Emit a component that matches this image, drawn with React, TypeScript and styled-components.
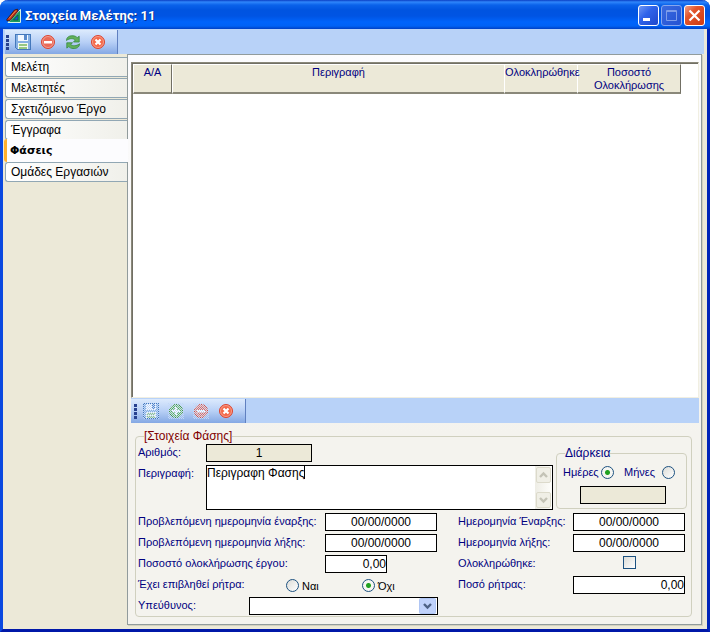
import React from "react";
import styled, { createGlobalStyle, css } from "styled-components";

const GlobalStyle = createGlobalStyle`
  * { box-sizing: border-box; }
  html, body { margin: 0; padding: 0; background: #ffffff; }
  body, input, textarea, select, button {
    font-family: "Liberation Sans", Arial, sans-serif;
    font-size: 12px;
    line-height: 14px;
    color: #000000;
  }
`;

const NAVY = "#000080";
const FACE = "#ece9d8";
const SHEET = "#f4f3ee";

const Window = styled.div`
  display: flex;
  flex-direction: column;
  min-height: 100vh;
  border: solid;
  border-width: 0 3px 3px;
  border-color: #0a48e0 #0024b8 #0018a8 #0a48e0;
  border-radius: 8px 8px 0 0;
  background: ${FACE};
`;

const TitleBar = styled.header`
  display: flex;
  align-items: center;
  height: 29px;
  margin: 0 -3px;
  padding: 2px 5px 0 6px;
  border-radius: 8px 8px 0 0;
  background: linear-gradient(#0a3fc4 0, #2f86fb 2px, #0a62ea 5px, #0054e0 10px, #0054e3 16px, #0064fb 22px, #0062f5 26px, #0040c4 29px);
`;

const Title = styled.h1`
  flex: 1;
  margin: 0 0 0 3px;
  padding-top: 1px;
  font: bold 13px/18px Roboto, "Open Sans", sans-serif;
  color: #ffffff;
  text-shadow: 1px 1px 0 #0a2f8a;
`;

const CaptionButtons = styled.div`
  display: flex;
  gap: 2px;
`;

const CaptionButton = styled.button<{ $kind: "min" | "max" | "close" }>`
  width: 21px;
  height: 21px;
  padding: 0;
  border: 1px solid ${(p) => (p.$kind === "max" ? "#86a6ee" : "#ffffff")};
  border-radius: 3px;
  background: ${(p) =>
    p.$kind === "close"
      ? "linear-gradient(135deg, #f0a088, #e2552c 35%, #cf3a10)"
      : p.$kind === "max"
      ? "linear-gradient(135deg, #3a6ae0, #2452d2)"
      : "linear-gradient(135deg, #6f97f4, #2f63ea 40%, #1f48cc)"};
  svg { display: block; }
`;

const ToolStrip = styled.div<{ $dock?: boolean }>`
  display: flex;
  height: 25px;
  flex: none;
  background: #b8d2f8;
  ${(p) => p.$dock && css`margin-right: 3px; padding-left: 2px;`}
`;

const Tools = styled.div<{ $inset?: boolean }>`
  display: flex;
  align-items: center;
  gap: 9px;
  height: 24px;
  margin-top: 1px;
  padding: 0 11px 0 ${(p) => (p.$inset ? 3 : 1)}px;
  border-right: 1px solid #6080c0;
  background: linear-gradient(#dceafd, #b8d0f6 50%, #84a8e4);
`;

const Grip = styled.span`
  width: 3px;
  height: 15px;
  margin-right: -3px;
  background: repeating-linear-gradient(#27418f 0 3px, transparent 3px 4px);
`;

const ToolButton = styled.button`
  width: 16px;
  height: 16px;
  padding: 0;
  border: 0;
  background: none;
  svg { display: block; }
`;

const Main = styled.div`
  display: flex;
  flex: 1;
  padding: 0 5px 4px 2px;
`;

const Tabs = styled.nav`
  display: flex;
  flex-direction: column;
  gap: 1px;
  width: 122px;
  padding-top: 3px;
`;

const Tab = styled.button<{ $active?: boolean }>`
  height: 20px;
  flex: none;
  padding: 0 0 0 5px;
  text-align: left;
  border: 1px solid #91a7b4;
  border-right: 0;
  border-radius: 3px 0 0 3px;
  background: linear-gradient(90deg, #ffffff, #f0f0ea);
  ${(p) =>
    p.$active &&
    css`
      z-index: 1;
      height: 23px;
      margin: -2px -1px -1px -1px;
      padding: 1px 0 0 3px;
      border: 0;
      border-left: 3px solid #ffb02e;
      background: #fcfcfe;
      font: bold 11px/14px "DejaVu Sans", sans-serif;
    `}
`;

const Sheet = styled.main`
  display: flex;
  flex: 1;
  min-width: 0;
  flex-direction: column;
  border: 1px solid #919b9c;
  box-shadow: 1px 1px 0 #d5d2bf;
  background: linear-gradient(#fcfcfe, ${SHEET} 380px);
  padding: 7px 2px 7px 3px;
`;

const GridView = styled.div`
  flex: 1;
  border: 1px solid;
  border-color: #8a887a #f1efe2 #f1efe2 #8a887a;
  box-shadow: inset 1px 1px 0 #716f64;
  background: #ffffff;
  padding: 1px 17px 0 1px;
`;

const Table = styled.table`
  width: 100%;
  table-layout: fixed;
  border-collapse: separate;
  border-spacing: 0;
`;

const HeadCell = styled.th<{ $width?: number; $strong?: boolean }>`
  width: ${(p) => (p.$width ? `${p.$width}px` : "auto")};
  height: 29px;
  padding: 1px 0 0;
  vertical-align: top;
  white-space: nowrap;
  font-weight: normal;
  font-size: 11px;
  line-height: 13px;
  color: ${NAVY};
  background: ${FACE};
  border-top: 1px solid #ffffff;
  border-left: 1px solid #ffffff;
  border-bottom: 2px solid #8a887a;
  border-right: ${(p) => (p.$strong ? "1px solid #716f64" : "0")};
`;

const Form = styled.form`
  padding: 6px 7px 0 4px;
`;

const Group = styled.fieldset`
  min-width: 0;
  margin: 0;
  padding: 0 0 1px;
  border: 1px solid #d0d0bf;
  border-radius: 4px;
`;

const Legend = styled.legend<{ $color: string }>`
  margin-left: 8px;
  padding: 0;
  height: 14px;
  color: ${(p) => p.$color};
`;

const TopArea = styled.div`
  display: flex;
  gap: 3px;
  padding: 1px 4px 3px 2px;
`;

const Identity = styled.div`
  display: grid;
  flex: 1;
  grid-template-columns: 68px 1fr;
  grid-template-rows: 18px 45px;
  row-gap: 3px;
`;

const Label = styled.label`
  color: ${NAVY};
  font-size: 11px;
  line-height: 16px;
  white-space: nowrap;
`;

const TextField = styled.input<{ $width?: number; $align?: string; $off?: boolean }>`
  width: ${(p) => p.$width ?? 112}px;
  height: 18px;
  padding: 0;
  border: 1px solid #000000;
  border-radius: 0;
  outline: 0;
  text-align: ${(p) => p.$align ?? "center"};
  background: ${(p) => (p.$off ? FACE : "#ffffff")};
`;

const MemoBox = styled.div`
  position: relative;
  display: flex;
  border: 1px solid #000000;
  background: #ffffff;
`;

const Memo = styled.textarea`
  flex: 1;
  min-width: 0;
  padding: 0;
  border: 0;
  outline: 0;
  resize: none;
  overflow: hidden;
  background: transparent;
`;

const Caret = styled.span`
  position: absolute;
  top: 0;
  left: 97px;
  width: 1px;
  height: 13px;
  background: #000000;
`;

const ScrollBar = styled.div`
  display: flex;
  flex-direction: column;
  justify-content: space-between;
  width: 17px;
  padding: 1px;
  background: linear-gradient(90deg, #eeede5, #fefefb);
`;

const ScrollButton = styled.button`
  width: 15px;
  height: 16px;
  padding: 0;
  border: 1px solid #dcdacb;
  border-radius: 2px;
  background: #f0efe6;
  svg { display: block; }
`;

const Duration = styled(Group)`
  width: 131px;
  margin-top: 2px;
  height: 63px;
`;

const DurationChoices = styled.div`
  display: grid;
  grid-template-columns: 38px 23px 38px 13px;
  align-items: center;
  padding: 4px 0 0 6px;
`;

const Radio = styled.input`
  appearance: none;
  flex: none;
  width: 13px;
  height: 13px;
  margin: 0;
  border: 1px solid #1c5180;
  border-radius: 50%;
  background: linear-gradient(135deg, #dcdcd7, #ffffff);
  &:checked {
    background: radial-gradient(circle, #21a121 0 2px, #f6f6f2 3px);
  }
`;

const DurationValue = styled.div`
  display: flex;
  justify-content: center;
  padding: 6px 0 0 2px;
`;

const Rows = styled.div`
  display: grid;
  grid-template-columns: 187px 1fr 115px 112px;
  grid-auto-rows: 18px;
  row-gap: 3px;
  padding: 0 6px 0 2px;
`;

const CheckBox = styled.input`
  appearance: none;
  width: 13px;
  height: 13px;
  margin: 1px 0 0 50px;
  border: 1px solid #1c5180;
  background: linear-gradient(135deg, #dcdcd7, #ffffff);
`;

const Split = styled.div`
  display: grid;
  grid-column: span 2;
  grid-template-columns: 148px 76px 1fr;
`;

const Choice = styled.label`
  display: flex;
  align-items: center;
  gap: 3px;
  padding-top: 1px;
  font-size: 11px;
`;

const Owner = styled.div`
  display: grid;
  grid-column: span 2;
  grid-template-columns: 111px 189px;
`;

const SelectBox = styled.div`
  position: relative;
  display: flex;
  svg {
    position: absolute;
    top: 1px;
    right: 1px;
    pointer-events: none;
  }
`;

const Select = styled.select`
  appearance: none;
  flex: 1;
  height: 18px;
  padding: 0 20px 0 2px;
  border: 1px solid #000000;
  border-radius: 0;
  background: #ffffff;
`;

const AppIcon = () => (
  <svg width="16" height="16" viewBox="0 0 16 16">
    <path d="M2 14.500h12.500V1.500z" fill="#1c9b62" stroke="#d8f4e4" />
    <path d="M7.500 12h4.500V7z" fill="#0b5bd8" stroke="#0d5e3a" strokeWidth=".8" />
    <path d="M.8 11.500 8.500 2l3-.8.5 2L4 12.500l-3 .3z" fill="#b8321c" stroke="#3c1408" strokeWidth=".8" />
    <path d="M3 10.500 10 2.500" stroke="#f08a50" />
  </svg>
);

const Veil = ({ id }: { id: string }) => (
  <>
    <defs>
      <pattern id={id} width="2" height="2" patternUnits="userSpaceOnUse">
        <path d="M0 0h1v1H0zM1 1h1v1H1z" fill="#c4d9f8" shapeRendering="crispEdges" />
      </pattern>
    </defs>
    <rect width="16" height="16" fill={`url(#${id})`} />
  </>
);

const SaveIcon = ({ off }: { off?: boolean }) => (
  <svg width="16" height="16" viewBox="0 0 16 16" shapeRendering="crispEdges">
    <path d="M.5.5h15v15h-13l-2-2z" fill="#86b0e4" stroke="#4478bc" />
    <path d="M3 1h10v6H3z" fill="#f4f8ff" />
    <path d="M9 1h3v5H9z" fill="#5a8acc" />
    <path d="M3 9h10v6H3z" fill="#f4faee" />
    <path d="M4 10h8v2H4zM4 13h8v2H4z" fill="#98c884" />
    {off && <Veil id="veil-save" />}
  </svg>
);

const RoundIcon = ({ kind, off }: { kind: "minus" | "plus" | "cross"; off?: boolean }) => {
  const green = kind === "plus";
  return (
    <svg width="16" height="16" viewBox="0 0 16 16">
      <circle cx="8" cy="8" r="6.500" fill={green ? "#55b04c" : kind === "cross" ? "#f4694a" : "#ea6a58"} stroke={green ? "#3c9038" : "#dc4430"} />
      <circle cx="8" cy="8" r="5.500" fill="none" stroke="#ffffff" strokeOpacity=".35" />
      {kind === "minus" && <path d="M4 7h8v2.500H4z" fill="#ffffff" />}
      {kind === "plus" && <path d="M4 8h8M8 4v8" stroke="#ffffff" strokeWidth="2.400" />}
      {kind === "cross" && <path d="m5.500 5.500 5 5m0-5-5 5" stroke="#ffffff" strokeWidth="2.200" />}
      {off && <Veil id={`veil-${kind}`} />}
    </svg>
  );
};

const RefreshIcon = () => (
  <svg width="16" height="16" viewBox="0 0 16 16" fill="#62b05a" stroke="#358a3c" strokeWidth=".8">
    <path d="M1.500 6.500C1.500 3 4.500 1.500 8 1.800c1.800 0 3.200.8 4.200 1.900l2-1.500V8H8.500l1.800-2C8.500 4.300 4.500 4 1.500 6.500z" />
    <path d="M14.500 9.800c0 3.500-3 5-6.500 4.700-1.800 0-3.200-.8-4.200-1.900l-2 1.500V8.800h5.700L5.700 10.500c1.800 1.700 5.800 1.800 8.800-.7z" />
  </svg>
);

const ArrowIcon = ({ up }: { up?: boolean }) => (
  <svg width="13" height="14" viewBox="0 0 13 14">
    <path d={up ? "m3 9 3.500-3.500L10 9" : "m3 5 3.500 3.500L10 5"} fill="none" stroke="#c4c3b6" strokeWidth="2.400" />
  </svg>
);

const TABS = ["Μελέτη", "Μελετητές", "Σχετιζόμενο Έργο", "Έγγραφα", "Φάσεις", "Ομάδες Εργασιών"];

export default function App() {
  return (
    <Window>
      <GlobalStyle />
      <TitleBar>
        <AppIcon />
        <Title>Στοιχεία Μελέτης: 11</Title>
        <CaptionButtons>
          <CaptionButton $kind="min" aria-label="Ελαχιστοποίηση">
            <svg width="19" height="19"><path d="M4 12h7v3H4z" fill="#ffffff" /></svg>
          </CaptionButton>
          <CaptionButton $kind="max" aria-label="Μεγιστοποίηση" disabled>
            <svg width="19" height="19"><path d="M4.500 4.500h10v10h-10zM4 5.500h11" fill="none" stroke="#7f9eea" /></svg>
          </CaptionButton>
          <CaptionButton $kind="close" aria-label="Κλείσιμο">
            <svg width="19" height="19"><path d="m4.500 4.500 10 10m0-10-10 10" stroke="#ffffff" strokeWidth="2.200" /></svg>
          </CaptionButton>
        </CaptionButtons>
      </TitleBar>
      <ToolStrip $dock>
        <Tools>
          <Grip />
          <ToolButton aria-label="Αποθήκευση"><SaveIcon /></ToolButton>
          <ToolButton aria-label="Διαγραφή"><RoundIcon kind="minus" /></ToolButton>
          <ToolButton aria-label="Ανανέωση"><RefreshIcon /></ToolButton>
          <ToolButton aria-label="Έξοδος"><RoundIcon kind="cross" /></ToolButton>
        </Tools>
      </ToolStrip>
      <Main>
        <Tabs>
          {TABS.map((name) => (
            <Tab key={name} $active={name === "Φάσεις"}>{name}</Tab>
          ))}
        </Tabs>
        <Sheet>
          <GridView>
            <Table>
              <thead>
                <tr>
                  <HeadCell $width={39} $strong>Α/Α</HeadCell>
                  <HeadCell>Περιγραφή</HeadCell>
                  <HeadCell $width={73}>Ολοκληρώθηκε</HeadCell>
                  <HeadCell $width={104} $strong>Ποσοστό<br />Ολοκλήρωσης</HeadCell>
                </tr>
              </thead>
            </Table>
          </GridView>
          <ToolStrip>
            <Tools $inset>
              <Grip />
              <ToolButton aria-label="Αποθήκευση φάσης" disabled><SaveIcon off /></ToolButton>
              <ToolButton aria-label="Προσθήκη φάσης" disabled><RoundIcon kind="plus" off /></ToolButton>
              <ToolButton aria-label="Διαγραφή φάσης" disabled><RoundIcon kind="minus" off /></ToolButton>
              <ToolButton aria-label="Ακύρωση"><RoundIcon kind="cross" /></ToolButton>
            </Tools>
          </ToolStrip>
          <Form>
            <Group>
              <Legend $color="#800000">[Στοιχεία Φάσης]</Legend>
              <TopArea>
                <Identity>
                  <Label htmlFor="number">Αριθμός:</Label>
                  <TextField id="number" $width={106} $off readOnly defaultValue="1" />
                  <Label htmlFor="description">Περιγραφή:</Label>
                  <MemoBox>
                    <Memo id="description" defaultValue="Περιγραφη Φασης" />
                    <Caret />
                    <ScrollBar>
                      <ScrollButton type="button" aria-label="Πάνω" disabled><ArrowIcon up /></ScrollButton>
                      <ScrollButton type="button" aria-label="Κάτω" disabled><ArrowIcon /></ScrollButton>
                    </ScrollBar>
                  </MemoBox>
                </Identity>
                <Duration>
                  <Legend $color={NAVY}>Διάρκεια</Legend>
                  <DurationChoices>
                    <Label htmlFor="days">Ημέρες</Label>
                    <Radio type="radio" name="unit" id="days" defaultChecked />
                    <Label htmlFor="months">Μήνες</Label>
                    <Radio type="radio" name="unit" id="months" />
                  </DurationChoices>
                  <DurationValue>
                    <TextField $width={86} $off readOnly aria-label="Διάρκεια" />
                  </DurationValue>
                </Duration>
              </TopArea>
              <Rows>
                <Label htmlFor="planned-start">Προβλεπόμενη ημερομηνία έναρξης:</Label>
                <TextField id="planned-start" defaultValue="00/00/0000" />
                <Label htmlFor="start">Ημερομηνία Έναρξης:</Label>
                <TextField id="start" defaultValue="00/00/0000" />
                <Label htmlFor="planned-end">Προβλεπόμενη ημερομηνία λήξης:</Label>
                <TextField id="planned-end" defaultValue="00/00/0000" />
                <Label htmlFor="end">Ημερομηνία λήξης:</Label>
                <TextField id="end" defaultValue="00/00/0000" />
                <Label htmlFor="percent">Ποσοστό ολοκλήρωσης έργου:</Label>
                <TextField id="percent" $width={62} $align="right" defaultValue="0,00" />
                <Label htmlFor="completed">Ολοκληρώθηκε:</Label>
                <CheckBox type="checkbox" id="completed" />
                <Split role="radiogroup" aria-labelledby="penalty">
                  <Label as="span" id="penalty">Έχει επιβληθεί ρήτρα:</Label>
                  <Choice><Radio type="radio" name="penalty" />Ναι</Choice>
                  <Choice><Radio type="radio" name="penalty" defaultChecked />Όχι</Choice>
                </Split>
                <Label htmlFor="amount">Ποσό ρήτρας:</Label>
                <TextField id="amount" $align="right" defaultValue="0,00" />
                <Owner>
                  <Label htmlFor="owner">Υπεύθυνος:</Label>
                  <SelectBox>
                    <Select id="owner" />
                    <svg width="18" height="16">
                      <rect x=".5" y=".5" width="16" height="15" rx="1" fill="#c0d2fb" stroke="#b0c6f4" />
                      <path d="m5 6 3.500 3.500L12 6" fill="none" stroke="#4d6185" strokeWidth="2.400" />
                    </svg>
                  </SelectBox>
                </Owner>
              </Rows>
            </Group>
          </Form>
        </Sheet>
      </Main>
    </Window>
  );
}
